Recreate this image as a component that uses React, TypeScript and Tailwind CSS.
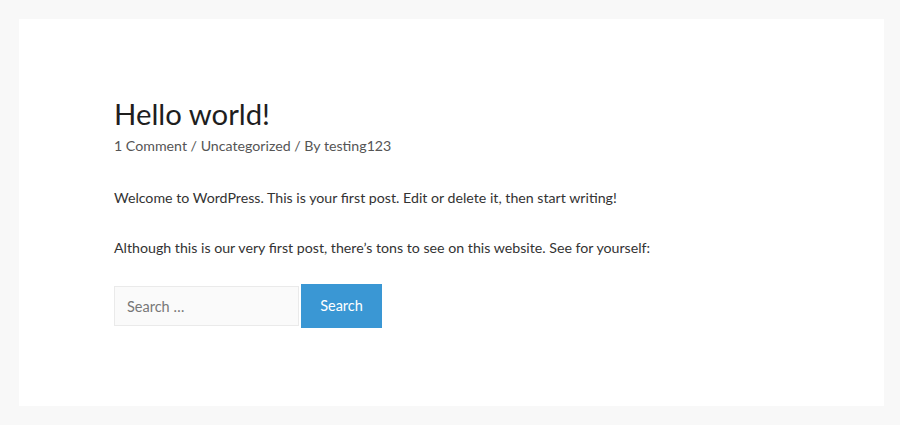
import React from 'react';

export default function App() {
  return (
    <div
      className="h-[425px] w-full bg-[#f8f8f8] pl-[19px] pr-[16px] pt-[19px] pb-[19px]"
      style={{ fontFamily: "Lato, 'Noto Sans', sans-serif" }}
    >
      {/* Post card */}
      <article className="h-full bg-white pl-[95px] pr-10 pt-[76px]">
        <h1 className="text-[29.3px] leading-[38px] font-normal text-[#1e1e1e]">Hello world!</h1>
        <div className="mt-[1px] text-[14.2px] leading-6 text-[#555]">
          1 Comment / Uncategorized / By testing123
        </div>

        <div className="mt-[28px] text-[14.2px] leading-6 text-[#333]">
          <p>Welcome to WordPress. This is your first post. Edit or delete it, then start writing!</p>
          <p className="mt-[26px]">
            Although this is our very first post, there’s tons to see on this website. See for yourself:
          </p>
        </div>

        {/* Search form */}
        <form className="mt-[24px] flex items-center gap-[2px]" onSubmit={e => e.preventDefault()}>
          <input
            type="search"
            placeholder="Search …"
            className="h-[40px] w-[185px] border border-[#eaeaea] bg-[#fafafa] px-[12px] text-[14.5px] text-[#666] placeholder:text-[#777] outline-none"
          />
          <button
            type="submit"
            className="h-[44px] w-[81px] bg-[#3a97d4] text-[14.5px] text-white"
          >
            Search
          </button>
        </form>
      </article>
    </div>
  );
}
